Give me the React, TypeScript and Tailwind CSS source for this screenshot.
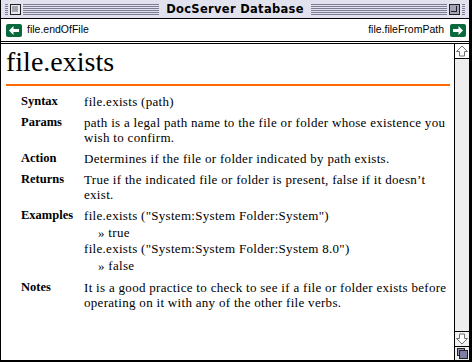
import React from 'react';

const serif = { fontFamily: '"Liberation Serif", "Times New Roman", serif' };
const sans = { fontFamily: '"Liberation Sans", Arial, sans-serif' };

function Stripes({ className = '' }: { className?: string }) {
    return (
        <div
            className={`h-[12px] bg-[repeating-linear-gradient(to_bottom,transparent_0px,transparent_1px,#7c7c94_1px,#7c7c94_2px)] ${className}`}
        />
    );
}

function CloseBox() {
    return (
        <div className="w-[11px] h-[11px] border border-[#222] bg-[#e6e6f2] p-[1px]">
            <div className="w-full h-full bg-[#a4a4b0] border-r border-b border-[#ececf4]" />
        </div>
    );
}

function ZoomBox() {
    return (
        <div className="w-[11px] h-[11px] border border-[#222] bg-[#a4a4b8] p-[1px]">
            <div className="w-[6px] h-[6px] border-r border-b border-[#222]" />
        </div>
    );
}

function NavArrow({ dir }: { dir: 'left' | 'right' }) {
    const pts =
        dir === 'left'
            ? '3,6.5 7.5,2 7.5,5 13,5 13,8 7.5,8 7.5,11'
            : '13,6.5 8.5,2 8.5,5 3,5 3,8 8.5,8 8.5,11';
    return (
        <svg width="16" height="13" viewBox="0 0 16 13">
            <rect x="0" y="0" width="16" height="13" rx="2" fill="#0b6a3c" />
            <polygon points={pts} fill="#ffffff" />
        </svg>
    );
}

function ScrollArrow({ dir }: { dir: 'up' | 'down' }) {
    const pts =
        dir === 'up'
            ? '7,2 12.5,7.5 9.5,7.5 9.5,12 4.5,12 4.5,7.5 1.5,7.5'
            : '7,12 12.5,6.5 9.5,6.5 9.5,2 4.5,2 4.5,6.5 1.5,6.5';
    return (
        <svg width="14" height="14" viewBox="0 0 14 14">
            <polygon points={pts} fill="#ffffff" stroke="#707070" strokeWidth="1" strokeLinejoin="miter" />
        </svg>
    );
}

function GrowBox() {
    return (
        <svg width="14" height="13" viewBox="0 0 14 13">
            <rect x="2.5" y="1.5" width="7" height="7" fill="#9898b4" stroke="#222" />
            <rect x="4.5" y="3.5" width="8" height="8" fill="#7e7ea0" stroke="#222" />
        </svg>
    );
}

function Row({ label, children }: { label: string; children: React.ReactNode }) {
    return (
        <>
            <div className="font-bold text-[12.5px] tracking-normal">{label}</div>
            <div>{children}</div>
        </>
    );
}

export default function App() {
    return (
        <div className="w-[472px] h-[362px] flex flex-col bg-white border-l border-black border-r-[3px] border-b-[2px] overflow-hidden">
            {/* title bar */}
            <div className="h-[19px] shrink-0 flex items-center bg-[#e2e2ee] border-b border-black pl-[4px] pr-[4px]">
                <Stripes className="w-[3px]" />
                <div className="px-[2px]">
                    <CloseBox />
                </div>
                <Stripes className="flex-1" />
                <div
                    className="px-[7px] text-[11.5px] font-bold text-black leading-[18px] tracking-[0.3px]"
                    style={{ fontFamily: '"DejaVu Sans", Verdana, sans-serif' }}
                >
                    DocServer Database
                </div>
                <Stripes className="flex-1" />
                <div className="px-[2px]">
                    <ZoomBox />
                </div>
                <Stripes className="w-[3px]" />
            </div>

            {/* navigation bar */}
            <div className="h-[22px] shrink-0 flex items-center pl-[5px] pr-[3px] text-[10.5px] text-black" style={sans}>
                <NavArrow dir="left" />
                <span className="ml-[5px]">file.endOfFile</span>
                <span className="ml-auto mr-[6px]">file.fileFromPath</span>
                <NavArrow dir="right" />
            </div>
            <div className="h-[3px] shrink-0 border-t border-b border-black" />

            {/* body */}
            <div className="flex-1 flex min-h-0">
                <div className="flex-1 pl-[5px] pr-[4px] pt-[2px] text-black" style={serif}>
                    <h1 className="text-[28px] leading-[32px]">file.exists</h1>
                    <div className="mt-[6px] h-[2px] bg-[#ff6a00]" />
                    <div className="mt-[8px] pl-[15px] grid grid-cols-[63px_1fr] gap-y-[6px] text-[13px] leading-[15px] tracking-[0.3px]">
                        <Row label="Syntax">file.exists (path)</Row>
                        <Row label="Params">
                            path is a legal path name to the file or folder whose existence you
                            <br />
                            wish to confirm.
                        </Row>
                        <Row label="Action">Determines if the file or folder indicated by path exists.</Row>
                        <Row label="Returns">
                            True if the indicated file or folder is present, false if it doesn’t
                            <br />
                            exist.
                        </Row>
                        <div className="font-bold text-[12.5px] tracking-normal">Examples</div>
                        <div className="leading-[16.5px]">
                            <div>file.exists ("System:System Folder:System")</div>
                            <div className="pl-[14px]">» true</div>
                            <div>file.exists ("System:System Folder:System 8.0")</div>
                            <div className="pl-[14px]">» false</div>
                        </div>
                        <Row label="Notes">
                            It is a good practice to check to see if a file or folder exists before
                            <br />
                            operating on it with any of the other file verbs.
                        </Row>
                    </div>
                </div>

                {/* scrollbar */}
                <div className="w-[15px] shrink-0 flex flex-col border-l border-black">
                    <div className="h-[15px] shrink-0 flex items-center justify-center bg-white border-b border-black">
                        <ScrollArrow dir="up" />
                    </div>
                    <div className="flex-1 bg-[#eeeeee]" />
                    <div className="h-[15px] shrink-0 flex items-center justify-center bg-[#f2f2f2] border-t border-black">
                        <ScrollArrow dir="down" />
                    </div>
                    <div className="h-[14px] shrink-0 flex items-center justify-center bg-[#eeeeee] border-t border-black">
                        <GrowBox />
                    </div>
                </div>
            </div>
        </div>
    );
}
